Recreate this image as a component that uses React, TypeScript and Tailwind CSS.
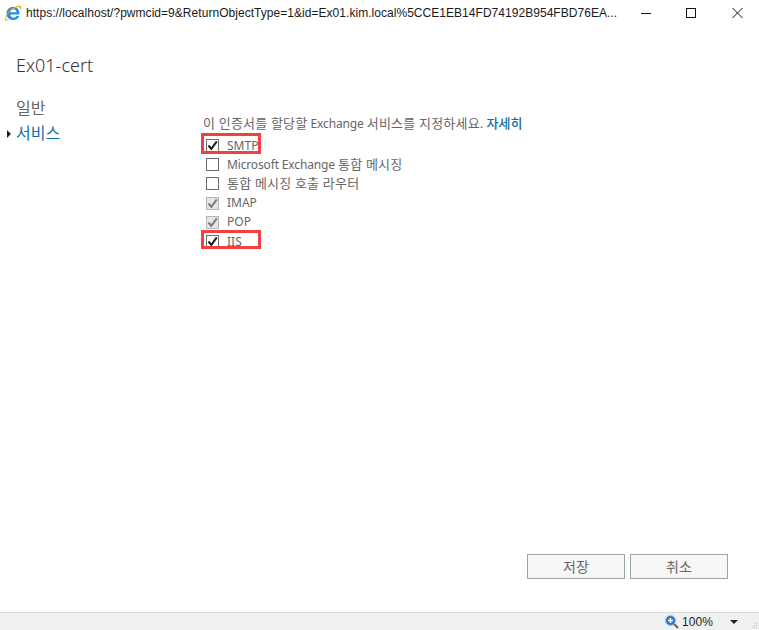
import React, { type FC, type ReactNode } from 'react'

const FONT = "font-['Noto_Sans','Noto_Sans_CJK_KR',sans-serif]"

// Korean runs sit a size up from the latin ones, as they do in the reference
const Ko: FC<{ children: ReactNode }> = ({ children }) => (
  <span className="text-[13px] tracking-[0.2px]">{children}</span>
)

const services: { label: ReactNode; state: string }[] = [
  { label: 'SMTP', state: 'on' },
  { label: <><span className="tracking-[-0.15px]">Microsoft Exchange</span> <Ko>통합 메시징</Ko></>, state: 'off' },
  { label: <Ko>통합 메시징 호출 라우터</Ko>, state: 'off' },
  { label: 'IMAP', state: 'disabled' },
  { label: 'POP', state: 'disabled' },
  { label: 'IIS', state: 'on' },
]

const IeLogo: FC = () => (
  <svg width="18" height="18" viewBox="0 0 18 18" fill="none">
    <path
      fillRule="evenodd"
      clipRule="evenodd"
      d="M9.200 2.800c3.900 0 6.500 2.900 6.300 7.600H6.500c.1 2 1.300 3.200 3.100 3.200 1.300 0 2.200-.5 2.800-1.500h2.900c-.9 2.500-3.100 4-5.800 4-3.900 0-7-2.500-7-6.300 0-4 2.900-7 6.700-7zM6.500 8.300h5.900c-.1-1.900-1.300-3.100-3-3.100-1.600 0-2.800 1.200-2.900 3.100z"
      fill="#2f8edb"
    />
    <path
      d="M1 15.800C.5 11.500 6.500 4.500 12.500 2c2.300-.9 4.200-.8 4.700.4.400 1-.1 2.500-1.200 3.900.3-1.700-.1-2.900-1.400-3.100C10.500 2.600 3.500 8.500 2.200 13.300c-.4 1.500 0 2.400 1.100 2.500.8 0 1.700-.2 2.700-.8-1.500 1.300-3 1.900-4 1.700-.5-.1-.9-.4-1-.9z"
      fill="#eeb32f"
    />
  </svg>
)

const CheckBox: FC<{ state: string }> = ({ state }) => {
  const isDisabled = state === 'disabled'
  return (
    <span
      className={`flex h-[13px] w-[13px] shrink-0 items-center justify-center border ${
        isDisabled ? 'border-[#b5b5b5] bg-[#e6e6e6]' : 'border-[#6d6d6d] bg-white'
      }`}
    >
      {state !== 'off' && (
        <svg width="11" height="11" viewBox="0 0 11 11" fill="none">
          <path
            d="M1.500 5.500 4.300 8.800 9.800 1.300"
            stroke={isDisabled ? '#7b7b7b' : '#1a1a1a'}
            strokeWidth="2"
          />
        </svg>
      )}
    </span>
  )
}

export default function App() {
  return (
    <div className={`flex h-[630px] w-[759px] flex-col overflow-hidden bg-white ${FONT}`}>
      {/* window title bar */}
      <div className="flex h-[25px] shrink-0 items-center pl-[4px]">
        <IeLogo />
        <span className="ml-[4px] w-[596px] whitespace-nowrap font-['Liberation_Sans',sans-serif] text-[12px] tracking-[0.04px] text-[#1a1a1a]">
          https://localhost/?pwmcid=9&amp;ReturnObjectType=1&amp;id=Ex01.kim.local%5CCE1EB14FD74192B954FBD76EA...
        </span>
        <svg className="ml-[17px]" width="114" height="14" viewBox="0 0 114 14" fill="none" stroke="#111" strokeWidth="1">
          <path d="M2 7.500H12" />
          <rect x="47.500" y="2.500" width="9" height="9" />
          <path d="M93.500 2 103.500 12M103.500 2 93.500 12" />
        </svg>
      </div>

      {/* dialog body */}
      <div className="flex min-h-0 flex-1 flex-col">
        <h1 className="mt-[28px] pl-[16px] text-[18px] leading-[24px] font-light text-[#333]">Ex01-cert</h1>

        <div className="mt-[19px] flex">
          <nav className="w-[203px] shrink-0 pl-[16px] text-[16px] leading-[25px]">
            <div className="text-[#666]">일반</div>
            <div className="relative text-[#0f6fa8]">
              <span className="absolute top-[9px] left-[-9px] h-0 w-0 border-y-[4px] border-l-[4px] border-y-transparent border-l-[#222]" />
              서비스
            </div>
          </nav>

          <div className="relative mt-[2px] flex-1 pt-[15px] text-[12px] text-[#666]">
            <p className="h-[20px] leading-[20px]">
              <Ko>이 인증서를 할당할</Ko> <span className="tracking-[-0.15px]">Exchange</span> <Ko>서비스를 지정하세요.</Ko>{' '}
              <span className="text-[13px] font-medium text-[#0f6fa8]">자세히</span>
            </p>
            <ul className="mt-[3px]">
              {services.map((s, i) => (
                <li key={i} className="flex h-[19.2px] items-center pl-[3px]">
                  <CheckBox state={s.state} />
                  <span className="ml-[8px] leading-none whitespace-nowrap">{s.label}</span>
                </li>
              ))}
            </ul>
            {/* red callouts from the annotated screenshot */}
            <span className="absolute top-[35px] left-[-2px] h-[21px] w-[60px] border-[3px] border-[#f04040]" />
            <span className="absolute top-[132px] left-[-2px] h-[19px] w-[60px] border-[3px] border-[#f04040]" />
          </div>
        </div>

        <div className="mt-auto mb-[33px] flex justify-end gap-[5px] pr-[31px]">
          <button className="h-[25px] w-[98px] border border-[#98a5a8] bg-[#f7f7f7] text-[14px] text-[#666]">저장</button>
          <button className="h-[25px] w-[98px] border border-[#98a5a8] bg-[#f7f7f7] text-[14px] text-[#666]">취소</button>
        </div>
      </div>

      {/* status bar */}
      <div className="relative flex h-[18px] shrink-0 items-center justify-end border-t border-[#d9d9d9] bg-[#f0f0f0] pr-[21px] font-['Liberation_Sans',sans-serif] text-[12px] text-[#222]">
        <svg width="14" height="14" viewBox="0 0 14 14">
          <circle cx="5.500" cy="5.500" r="5" fill="#2b78c5" stroke="#a9c4dc" />
          <path d="M3 5.500H8M5.500 3V8" stroke="#fff" strokeWidth="1.500" />
          <path d="M9 9l4 4" stroke="#8a5a2b" strokeWidth="2" />
        </svg>
        <span className="ml-[3px] tracking-[0.1px]">100%</span>
        <span className="ml-[17px] h-0 w-0 border-x-[4px] border-t-[4px] border-x-transparent border-t-[#222]" />
        <svg className="absolute right-[1px] bottom-[1px]" width="7" height="7" viewBox="0 0 7 7" fill="#bdbdbd">
          <rect x="5" y="1" width="1" height="1" />
          <rect x="3" y="3" width="1" height="1" />
          <rect x="5" y="3" width="1" height="1" />
          <rect x="1" y="5" width="1" height="1" />
          <rect x="3" y="5" width="1" height="1" />
          <rect x="5" y="5" width="1" height="1" />
        </svg>
      </div>
    </div>
  )
}
